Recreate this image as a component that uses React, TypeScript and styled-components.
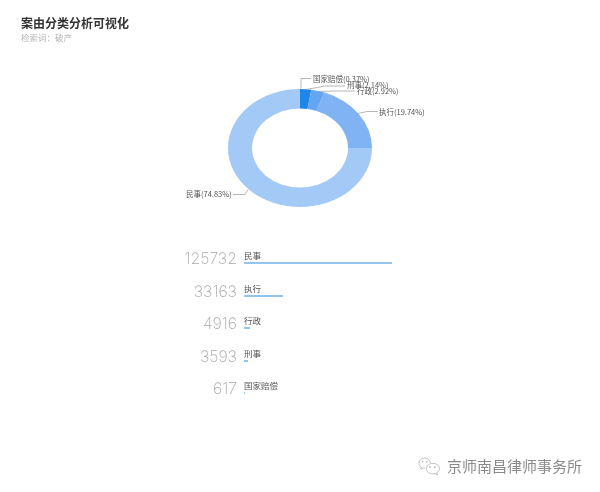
import React from 'react'
import styled, {createGlobalStyle} from 'styled-components'

const CX = 140
const CY = 74
const OUT_X = 72
const OUT_Y = 59
const IN_X = 48
const IN_Y = 39.5

const point = (rx: number, ry: number, deg: number) => {
    const r = (deg * Math.PI) / 180
    return `${(CX + rx * Math.sin(r)).toFixed(2)} ${(CY - ry * Math.cos(r)).toFixed(2)}`
}

const slicePath = (from: number, to: number) => {
    const large = to - from > 180 ? 1 : 0
    return `M${point(OUT_X, OUT_Y, from)} A${OUT_X} ${OUT_Y} 0 ${large} 1 ${point(OUT_X, OUT_Y, to)} L${point(IN_X, IN_Y, to)} A${IN_X} ${IN_Y} 0 ${large} 0 ${point(IN_X, IN_Y, from)} Z`
}

const slices = [
    {from: 0, to: 9, color: '#1d86e8'},
    {from: 9, to: 20, color: '#64a6f4'},
    {from: 20, to: 90, color: '#7fb3f3'},
    {from: 90, to: 360, color: '#a3c9f6'},
]

const callouts = [
    {text: '国家赔偿(0.37%)', x: 153, y: 8.2, line: 'M141 14.5 V4.5 H151'},
    {text: '刑事(2.14%)', x: 187, y: 14.2, line: 'M146 15.5 L165 12 H185'},
    {text: '行政(2.92%)', x: 197, y: 20.2, line: 'M157 17.5 L175 17 H195'},
    {text: '执行(19.74%)', x: 219, y: 41.2, line: 'M198 39.5 L207 37.5 H218'},
    {text: '民事(74.83%)', x: 26, y: 123.2, line: 'M88 115.5 L85 120.5 H73'},
]

const rows = [
    {count: 125732, name: '民事', width: 148},
    {count: 33163, name: '执行', width: 39},
    {count: 4916, name: '行政', width: 6},
    {count: 3593, name: '刑事', width: 4},
    {count: 617, name: '国家赔偿', width: 1},
]

const sans = `"Noto Sans CJK SC", "Noto Sans", sans-serif`

const GlobalStyle = createGlobalStyle`
    html, body {
        margin: 0;
        background: #fff;
    }
`

const Page = styled.div`
    width: 600px;
    height: 492px;
    box-sizing: border-box;
    overflow: hidden;
    display: flex;
    flex-direction: column;
    padding-top: 15px;
    background: #fff;
    font-family: ${sans};
    filter: blur(0.35px);
`

const Header = styled.header`
    padding-left: 21px;
`

const Title = styled.h1`
    margin: 0;
    font-size: 12px;
    line-height: 16px;
    font-weight: 700;
    color: #333;
`

const Keyword = styled.p`
    margin: 0;
    font-size: 8.5px;
    line-height: 13px;
    color: #b5b5b5;
`

const ChartArea = styled.div`
    display: flex;
    justify-content: center;
    margin-top: 29.5px;
`

const Donut = styled.svg`
    display: block;
    width: 280px;
    height: 150px;
`

const Label = styled.text`
    font-family: ${sans};
    font-size: 7.5px;
    fill: #555;
`

const Leader = styled.path`
    fill: none;
    stroke: #999;
    stroke-width: 0.7;
`

const Stats = styled.div`
    display: flex;
    flex-direction: column;
    gap: 10.5px;
    margin-top: 24.5px;
`

const Row = styled.div`
    display: grid;
    grid-template-columns: 237px 1fr;
    column-gap: 7px;
    height: 22px;
`

const Count = styled.span`
    font-family: Inter, sans-serif;
    font-weight: 200;
    font-size: 15.8px;
    line-height: 22px;
    text-align: right;
    color: #a8a8a8;
`

const RowBody = styled.div`
    display: flex;
    flex-direction: column;
    align-items: flex-start;
    padding-top: 1px;
`

const RowName = styled.span`
    font-size: 8.5px;
    line-height: 13px;
    color: #555;
`

const Bar = styled.div`
    height: 2px;
    background: #94c5ec;
`

const Footer = styled.footer`
    display: flex;
    align-items: center;
    justify-content: flex-end;
    gap: 5px;
    margin-top: auto;
    padding: 0 18px 16px 0;
`

const FirmName = styled.span`
    font-size: 15px;
    line-height: 20px;
    color: #8a8a8a;
`

const WeChatIcon = () => (
    <svg width="25" height="19" viewBox="0 0 22 18" fill="none" stroke="#aaa" strokeWidth="0.7">
        <path d="M12 5.500C11.500 3 9 1 6.500 1 3.500 1 1 3.200 1 5.800c0 1.600.9 3 2.300 3.800L2.800 11.500 5 10.400c.6.1 1 .2 1.600.2" />
        <path d="M14 6c-3.300 0-6 2.300-6 5s2.700 5 6 5c.8 0 1.500-.1 2.200-.4l2.300 1.300-.6-2.200c1.500-.9 2.600-2.300 2.600-3.900 0-2.700-2.800-4.800-6.500-4.800z" />
        <circle cx="11.500" cy="9.500" r="0.8" fill="#aaa" stroke="none" />
        <circle cx="16" cy="9.500" r="0.8" fill="#aaa" stroke="none" />
        <circle cx="4.500" cy="4.500" r="0.7" fill="#aaa" stroke="none" />
        <circle cx="8.500" cy="4.500" r="0.7" fill="#aaa" stroke="none" />
    </svg>
)

function App() {
    return (
        <Page>
            <GlobalStyle />
            <Header>
                <Title>案由分类分析可视化</Title>
                <Keyword>检索词：破产</Keyword>
            </Header>
            <ChartArea>
                <Donut viewBox="0 0 280 150">
                    {slices.map((s) => (
                        <path key={s.from} d={slicePath(s.from, s.to)} fill={s.color} />
                    ))}
                    {callouts.map((c) => (
                        <g key={c.text}>
                            <Leader d={c.line} />
                            <Label x={c.x} y={c.y}>{c.text}</Label>
                        </g>
                    ))}
                </Donut>
            </ChartArea>
            <Stats>
                {rows.map((row) => (
                    <Row key={row.name}>
                        <Count>{row.count}</Count>
                        <RowBody>
                            <RowName>{row.name}</RowName>
                            <Bar style={{width: row.width}} />
                        </RowBody>
                    </Row>
                ))}
            </Stats>
            <Footer>
                <WeChatIcon />
                <FirmName>京师南昌律师事务所</FirmName>
            </Footer>
        </Page>
    )
}

export default App
